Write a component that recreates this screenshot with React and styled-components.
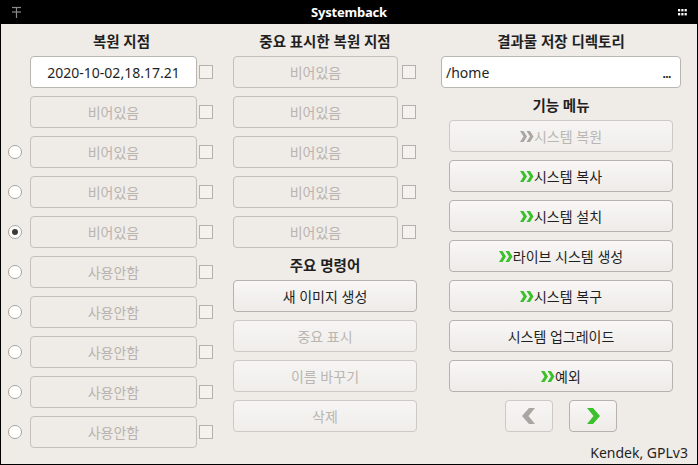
import React from "react";
import styled, { createGlobalStyle, css } from "styled-components";

const Global = createGlobalStyle`
  html, body { margin: 0; padding: 0; background: #000; }
  body { font-family: "Noto Sans", "Noto Sans CJK KR", sans-serif; }
  #root { width: 698px; height: 465px; }
`;

const Window = styled.div`
  width: 698px;
  height: 465px;
  box-sizing: border-box;
  background: #000;
  display: flex;
  flex-direction: column;
  padding: 0 1px 1px 1px;
`;

const TitleBar = styled.div`
  height: 24px;
  flex: 0 0 24px;
  display: flex;
  align-items: center;
  justify-content: space-between;
  padding: 0 10px 0 10px;
  color: #fff;
  position: relative;
`;

const Title = styled.div`
  position: absolute;
  left: 0;
  right: 0;
  text-align: center;
  font-family: "Noto Sans", sans-serif;
  font-weight: 700;
  font-size: 13px;
  letter-spacing: -0.2px;
  pointer-events: none;
`;

const Body = styled.div`
  flex: 1;
  background: #efebe7;
  display: flex;
  align-items: flex-start;
  padding: 0 0 0 7px;
  position: relative;
`;

const Column = styled.div`
  display: flex;
  flex-direction: column;
  flex: 0 0 ${(p) => p.$w}px;
  width: ${(p) => p.$w}px;
  margin-left: ${(p) => p.$ml || 0}px;
`;

const Header = styled.div`
  height: 32px;
  display: flex;
  align-items: center;
  justify-content: center;
  font-weight: 700;
  font-size: 14.5px;
  color: #1f1f1f;
  padding-left: ${(p) => p.$pl || 0}px;
  margin-top: ${(p) => p.$mt || 0}px;
`;

const Row = styled.div`
  height: 32px;
  display: flex;
  align-items: center;
  margin-bottom: 8px;
`;

const RadioSlot = styled.div`
  width: 22px;
  flex: 0 0 22px;
  display: flex;
  align-items: center;
`;

const Radio = styled.div`
  box-sizing: border-box;
  width: 14px;
  height: 14px;
  border-radius: 50%;
  border: 1px solid #a9a6a2;
  background: #fff;
  display: flex;
  align-items: center;
  justify-content: center;
  &::after {
    content: "";
    display: ${(p) => (p.$checked ? "block" : "none")};
    width: 6px;
    height: 6px;
    border-radius: 50%;
    background: #3c3c3c;
  }
`;

const Field = styled.div`
  box-sizing: border-box;
  flex-shrink: 0;
  width: ${(p) => p.$w}px;
  height: 32px;
  border-radius: 4px;
  display: flex;
  align-items: center;
  justify-content: ${(p) => (p.$left ? "space-between" : "center")};
  padding: ${(p) => (p.$left ? "0 9px 0 4px" : "0")};
  font-size: 14px;
  ${(p) =>
    p.$enabled
      ? css`
          background: #fff;
          border: 1px solid #b9b5b1;
          color: #1f1f1f;
        `
      : css`
          background: #efebe7;
          border: 1px solid #c3bfbb;
          color: #b8b4b0;
        `}
`;

const Dots = styled.span`
  font-weight: 700;
  font-size: 12px;
  letter-spacing: -0.5px;
  margin-top: 2px;
`;

const Check = styled.div`
  box-sizing: border-box;
  flex-shrink: 0;
  width: 14px;
  height: 14px;
  border: 1px solid #b4b0ac;
  background: #f4f2ef;
  margin-left: ${(p) => p.$ml}px;
`;

const Button = styled.div`
  box-sizing: border-box;
  flex-shrink: 0;
  width: ${(p) => p.$w}px;
  height: 32px;
  border-radius: 4px;
  display: flex;
  align-items: center;
  justify-content: center;
  font-size: 14px;
  margin-bottom: 8px;
  margin-left: ${(p) => p.$ml || 0}px;
  ${(p) =>
    p.$disabled
      ? css`
          border: 1px solid #cdc9c5;
          color: #bab6b2;
          background: linear-gradient(#f6f5f3, #f0eeeb);
        `
      : css`
          border: 1px solid #b6b2ae;
          color: #1f1f1f;
          background: linear-gradient(#f8f7f6, #eeebe8);
        `}
`;

const NavRow = styled.div`
  display: flex;
  justify-content: center;
  gap: 16px;
`;

const Footer = styled.div`
  position: absolute;
  right: 9px;
  bottom: 2px;
  font-size: 14px;
  color: #1f1f1f;
`;

const Double = ({ gray }) => (
  <svg width="14" height="11" viewBox="0 0 14 11">
    <g fill={gray ? "#a9a6a2" : "#3cc02c"}>
      <polygon points="0,0 3.5,0 7,5.5 3.5,11 0,11 3.5,5.5" />
      <polygon points="6.5,0 10,0 13.5,5.5 10,11 6.5,11 10,5.5" />
    </g>
  </svg>
);

const Chevron = ({ left, gray }) => (
  <svg width="14" height="16" viewBox="0 0 14 16">
    <polygon
      fill={gray ? "#a9a6a2" : "#3cc02c"}
      points={left ? "13,0 7,0 0,8 7,16 13,16 6.5,8" : "1,0 7,0 14,8 7,16 1,16 7.5,8"}
    />
  </svg>
);

const PinIcon = () => (
  <svg width="11" height="12" viewBox="0 0 11 12">
    <g stroke="#8a8a8a" strokeWidth="1.2" fill="none">
      <line x1="1" y1="1.5" x2="10" y2="1.5" />
      <line x1="1" y1="6" x2="10" y2="6" />
      <line x1="5.5" y1="1.5" x2="5.5" y2="12" />
    </g>
  </svg>
);

const MenuIcon = () => (
  <svg width="9" height="7" viewBox="0 0 9 7">
    <g fill="#fff">
      {[0, 3.3, 6.6].map((x) =>
        [0, 4].map((y) => <rect key={x + "-" + y} x={x} y={y} width="2.2" height="2.4" />)
      )}
    </g>
  </svg>
);

const leftRows = [
  { radio: false, text: "2020-10-02,18.17.21", enabled: true },
  { radio: false, text: "비어있음" },
  { radio: true, text: "비어있음" },
  { radio: true, text: "비어있음" },
  { radio: true, checked: true, text: "비어있음" },
  { radio: true, text: "사용안함" },
  { radio: true, text: "사용안함" },
  { radio: true, text: "사용안함" },
  { radio: true, text: "사용안함" },
  { radio: true, text: "사용안함" },
];

const menu = [
  { t: "시스템 복원", icon: true, disabled: true },
  { t: "시스템 복사", icon: true },
  { t: "시스템 설치", icon: true },
  { t: "라이브 시스템 생성", icon: true },
  { t: "시스템 복구", icon: true },
  { t: "시스템 업그레이드" },
  { t: "예외", icon: true },
];

export default function App() {
  return (
    <>
      <Global />
      <Window>
        <TitleBar>
          <PinIcon />
          <Title>Systemback</Title>
          <MenuIcon />
        </TitleBar>
        <Body>
          <Column $w={205}>
            <Header $pl={22}>복원 지점</Header>
            {leftRows.map((r, i) => (
              <Row key={i}>
                <RadioSlot>{r.radio && <Radio $checked={r.checked} />}</RadioSlot>
                <Field $w={167} $enabled={r.enabled}>
                  {r.text}
                </Field>
                <Check $ml={2} />
              </Row>
            ))}
          </Column>
          <Column $w={184} $ml={20}>
            <Header>중요 표시한 복원 지점</Header>
            {[0, 1, 2, 3, 4].map((i) => (
              <Row key={i}>
                <Field $w={165}>비어있음</Field>
                <Check $ml={4} />
              </Row>
            ))}
            <Header $mt={-8}>주요 명령어</Header>
            <Button $w={184}>새 이미지 생성</Button>
            <Button $w={184} $disabled>
              중요 표시
            </Button>
            <Button $w={184} $disabled>
              이름 바꾸기
            </Button>
            <Button $w={184} $disabled>
              삭제
            </Button>
          </Column>
          <Column $w={240} $ml={24}>
            <Header>결과물 저장 디렉토리</Header>
            <Field $w={240} $enabled $left>
              <span>/home</span>
              <Dots>...</Dots>
            </Field>
            <Header>기능 메뉴</Header>
            {menu.map((m) => (
              <Button key={m.t} $w={224} $ml={8} $disabled={m.disabled}>
                {m.icon && <Double gray={m.disabled} />}
                {m.t}
              </Button>
            ))}
            <NavRow>
              <Button $w={48} $disabled>
                <Chevron left gray />
              </Button>
              <Button $w={48}>
                <Chevron />
              </Button>
            </NavRow>
          </Column>
          <Footer>Kendek, GPLv3</Footer>
        </Body>
      </Window>
    </>
  );
}
